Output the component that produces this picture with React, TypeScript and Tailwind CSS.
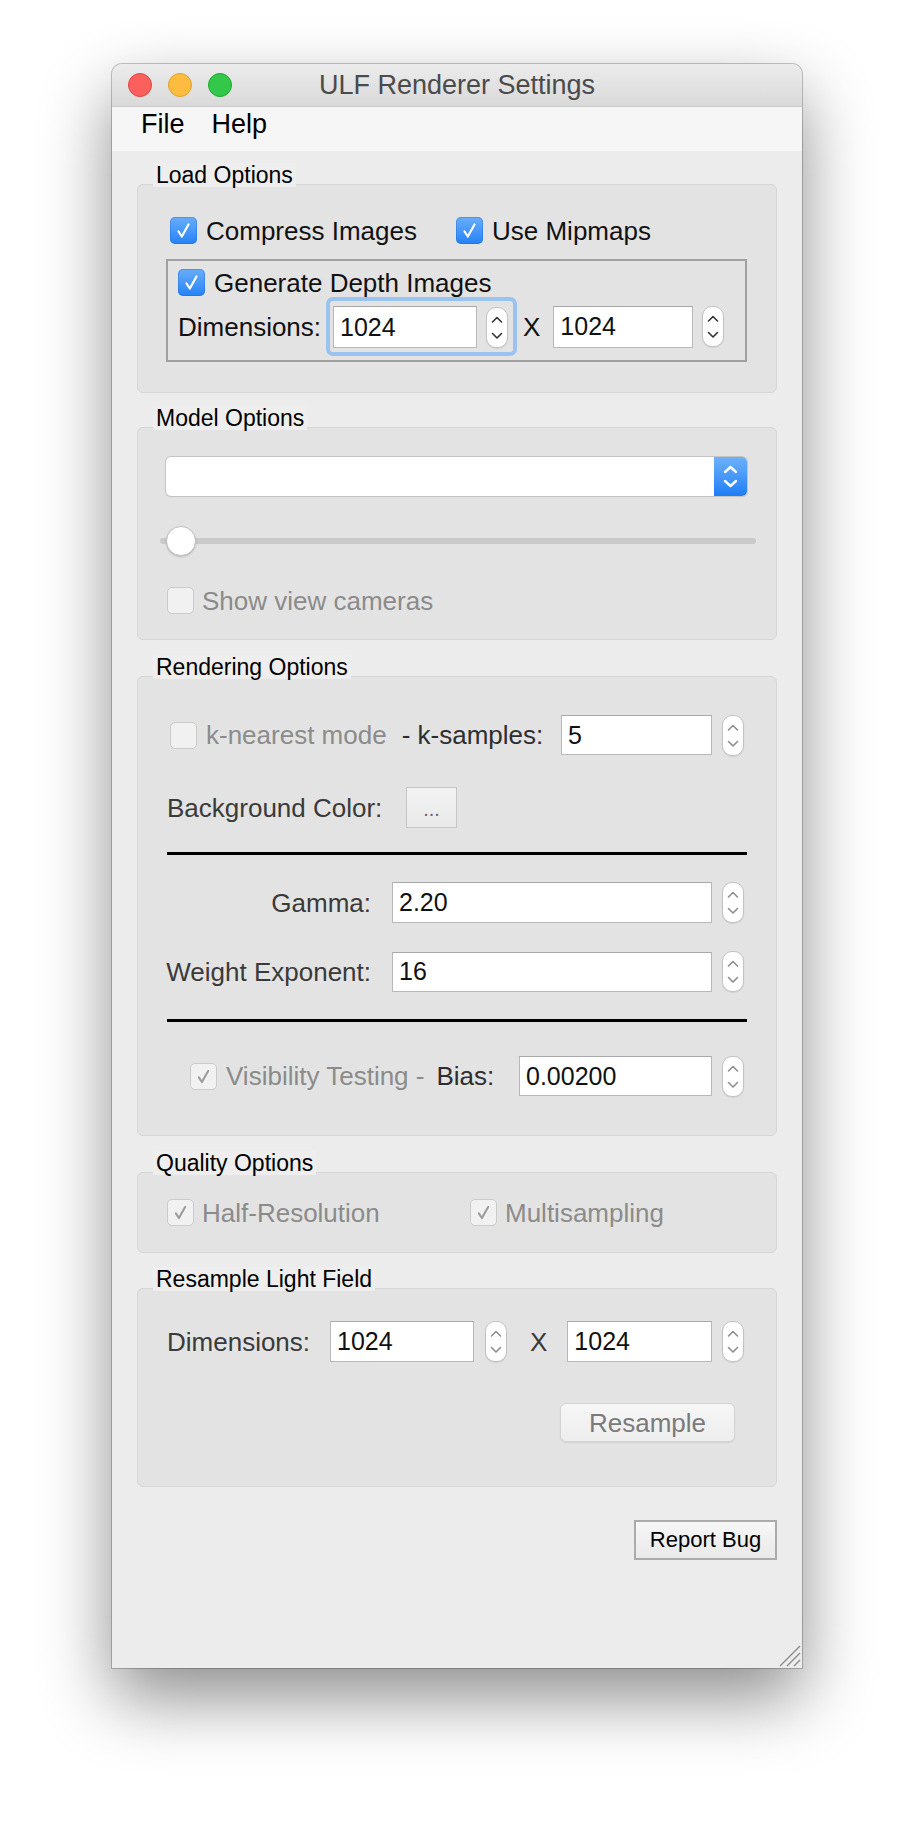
import type { ReactNode } from "react";

// ULF Renderer Settings — macOS Qt settings window

function Tick({ color }: { color: string }) {
  return (
    <svg viewBox="0 0 27 27" className="h-full w-full">
      <path
        d="M8.5 14.5 L11.8 19.5 L18.5 7.5"
        fill="none"
        stroke={color}
        strokeWidth="2.2"
        strokeLinecap="round"
        strokeLinejoin="round"
      />
    </svg>
  );
}

function CheckBox({ checked, disabled }: { checked?: boolean; disabled?: boolean }) {
  if (checked && !disabled) {
    return (
      <span className="block h-[27px] w-[27px] shrink-0 rounded-[5px] bg-gradient-to-b from-[#68adfb] to-[#2082f6] shadow-[inset_0_0_0_1px_rgba(30,100,210,0.35)]">
        <Tick color="#ffffff" />
      </span>
    );
  }
  return (
    <span className="block h-[27px] w-[27px] shrink-0 rounded-[5px] border border-[#cbcbcb] bg-[#f1f1f1]">
      {checked && <Tick color="#9a9a9a" />}
    </span>
  );
}

function Stepper({ dim }: { dim?: boolean }) {
  const c = dim ? "#8e8e8e" : "#333333";
  return (
    <span className="block h-[41px] w-[22px] shrink-0 rounded-[10px] border border-[#c3c3c3] bg-white shadow-[0_1px_1px_rgba(0,0,0,0.08)]">
      <svg viewBox="0 0 20 39" className="h-full w-full">
        <path d="M5.5 14 L10 9.5 L14.5 14" fill="none" stroke={c} strokeWidth="1.6" strokeLinecap="round" strokeLinejoin="round" />
        <path d="M5.5 25.5 L10 30 L14.5 25.5" fill="none" stroke={c} strokeWidth="1.6" strokeLinecap="round" strokeLinejoin="round" />
      </svg>
    </span>
  );
}

function Field({ value, className }: { value: string; className: string }) {
  return (
    <div
      className={`flex shrink-0 items-center border border-[#b8b8b8] border-t-[#a9a9a9] bg-white pl-[6px] text-[25px] leading-none text-[#111] ${className}`}
    >
      {value}
    </div>
  );
}

function Group({
  title,
  className,
  boxClassName,
  children,
}: {
  title: string;
  className: string;
  boxClassName: string;
  children: ReactNode;
}) {
  return (
    <div className={className}>
      <div className="relative z-10 h-[21px] pl-[16px]">
        <span className="inline-block bg-[#eeeeee] px-[3px] text-[23px] leading-[24px] text-black">{title}</span>
      </div>
      <div className={`rounded-[6px] border border-[#d6d6d6] bg-[#e3e3e3] ${boxClassName}`}>{children}</div>
    </div>
  );
}

export default function App() {
  return (
    <div className="h-[1828px] w-[914px] overflow-hidden bg-white pl-[112px] pt-[64px] font-['Liberation_Sans',Arial,sans-serif]">
      <div className="relative flex h-[1604px] w-[690px] flex-col rounded-t-[10px] bg-[#ececec] shadow-[0_30px_70px_rgba(0,0,0,0.45),0_0_0_1px_rgba(0,0,0,0.22)]">
        {/* title bar */}
        <div className="grid h-[43px] grid-cols-[1fr_auto_1fr] items-center rounded-t-[10px] border-b border-[#c9c9c9] bg-gradient-to-b from-[#ececec] to-[#d9d9d9]">
          <div className="flex items-center gap-[16px] pl-[16px]">
            <span className="h-[24px] w-[24px] rounded-full border border-[#e0443e] bg-[#fc605c]" />
            <span className="h-[24px] w-[24px] rounded-full border border-[#dea123] bg-[#fdbc40]" />
            <span className="h-[24px] w-[24px] rounded-full border border-[#1aab29] bg-[#34c84a]" />
          </div>
          <div className="text-[27px] leading-none text-[#4b4b4b]">ULF Renderer Settings</div>
          <div />
        </div>

        {/* menu bar */}
        <div className="flex h-[44px] gap-[27px] bg-[#f6f6f6] pl-[29px] pt-[4px] text-[27px] leading-none text-black">
          <span>File</span>
          <span>Help</span>
        </div>

        <div className="flex flex-col px-[25px]">
          {/* Load Options */}
          <Group title="Load Options" className="mt-[12px]" boxClassName="h-[209px] pl-[28px] pt-[32px]">
            <div className="flex h-[27px] items-center pl-[4px] text-[26px] leading-none text-[#111]">
              <div className="flex w-[286px] items-center gap-[9px]">
                <CheckBox checked />
                <span>Compress Images</span>
              </div>
              <div className="flex items-center gap-[9px]">
                <CheckBox checked />
                <span>Use Mipmaps</span>
              </div>
            </div>
            <div className="mt-[15px] h-[103px] w-[581px] border-2 border-[#a0a0a0] pl-[10px] pt-[8px] text-[26px] leading-none text-[#111]">
              <div className="flex h-[27px] items-center gap-[9px]">
                <CheckBox checked />
                <span>Generate Depth Images</span>
              </div>
              <div className="mt-[1px] flex items-center">
                <span className="w-[148px]">Dimensions:</span>
                <div className="flex items-center rounded-[7px] border-[4px] border-[#9cc3ef] pb-[4px] pl-[3px] pr-[5px] pt-[5px]">
                  <Field value="1024" className="h-[42px] w-[144px]" />
                  <span className="ml-[9px]">
                    <Stepper />
                  </span>
                </div>
                <span className="ml-[6px]">X</span>
                <Field value="1024" className="ml-[13px] h-[42px] w-[140px]" />
                <span className="ml-[9px]">
                  <Stepper />
                </span>
              </div>
            </div>
          </Group>

          {/* Model Options */}
          <Group title="Model Options" className="mt-[13px]" boxClassName="h-[213px] pl-[28px] pt-[29px]">
            <div className="flex h-[39px] w-[581px] rounded-[5px] bg-white shadow-[0_0_0_1px_#c4c4c4,0_1px_1px_rgba(0,0,0,0.15)]">
              <div className="flex-1" />
              <div className="flex w-[33px] items-center justify-center rounded-r-[5px] bg-gradient-to-b from-[#6cb2fb] to-[#1b7df5]">
                <svg viewBox="0 0 33 39" className="h-full w-full">
                  <path d="M11 15 L16.5 10 L22 15" fill="none" stroke="#fff" strokeWidth="2.4" strokeLinecap="round" strokeLinejoin="round" />
                  <path d="M11 24 L16.5 29 L22 24" fill="none" stroke="#fff" strokeWidth="2.4" strokeLinecap="round" strokeLinejoin="round" />
                </svg>
              </div>
            </div>
            <div className="relative -ml-[6px] mt-[30px] h-[30px] w-[596px]">
              <div className="absolute left-0 right-0 top-[12px] h-[6px] rounded-full bg-[#cacaca]" />
              <div className="absolute left-[6px] top-0 h-[30px] w-[30px] rounded-full border border-[#c2c2c2] bg-white shadow-[0_1px_2px_rgba(0,0,0,0.2)]" />
            </div>
            <div className="mt-[31px] flex items-center gap-[8px] pl-[1px] text-[26px] leading-none text-[#8b8b8b]">
              <CheckBox disabled />
              <span>Show view cameras</span>
            </div>
          </Group>

          {/* Rendering Options */}
          <Group title="Rendering Options" className="mt-[15px]" boxClassName="h-[460px] pl-[29px] pt-[38px]">
            <div className="flex h-[40px] items-center text-[26px] leading-none">
              <div className="flex w-[394px] items-center">
                <span className="ml-[3px]">
                  <CheckBox disabled />
                </span>
                <span className="ml-[9px] text-[#8b8b8b]">k-nearest mode</span>
                <span className="ml-[15px] text-[#2e2e2e]">- k-samples:</span>
              </div>
              <Field value="5" className="h-[40px] w-[151px]" />
              <span className="ml-[10px]">
                <Stepper dim />
              </span>
            </div>

            <div className="mt-[32px] flex items-center text-[26px] leading-none text-[#3a3a3a]">
              <span className="w-[239px]">Background Color:</span>
              <div className="flex h-[41px] w-[51px] items-center justify-center border border-[#c6c6c6] bg-gradient-to-b from-[#f3f3f3] to-[#e9e9e9] pt-[2px] text-[20px] text-[#666]">
                ...
              </div>
            </div>

            <div className="mt-[24px] h-[3px] w-[580px] bg-black" />

            <div className="mt-[27px] flex items-center text-[26px] leading-none text-[#3a3a3a]">
              <span className="flex w-[204px] justify-end whitespace-nowrap">Gamma:</span>
              <Field value="2.20" className="ml-[21px] h-[41px] w-[320px]" />
              <span className="ml-[10px]">
                <Stepper dim />
              </span>
            </div>
            <div className="mt-[28px] flex items-center text-[26px] leading-none text-[#3a3a3a]">
              <span className="flex w-[204px] justify-end whitespace-nowrap">Weight Exponent:</span>
              <Field value="16" className="ml-[21px] h-[40px] w-[320px]" />
              <span className="ml-[10px]">
                <Stepper dim />
              </span>
            </div>

            <div className="mt-[27px] h-[3px] w-[580px] bg-black" />

            <div className="mt-[34px] flex h-[40px] items-center text-[26px] leading-none">
              <div className="flex w-[352px] items-center whitespace-nowrap">
                <span className="ml-[23px]">
                  <CheckBox checked disabled />
                </span>
                <span className="ml-[9px] text-[#8b8b8b]">Visibility Testing -</span>
                <span className="ml-[12px] text-[#2e2e2e]">Bias:</span>
              </div>
              <Field value="0.00200" className="h-[40px] w-[193px]" />
              <span className="ml-[10px]">
                <Stepper dim />
              </span>
            </div>
          </Group>

          {/* Quality Options */}
          <Group title="Quality Options" className="mt-[15px]" boxClassName="h-[81px] pl-[29px] pt-[26px]">
            <div className="flex items-center text-[26px] leading-none text-[#8b8b8b]">
              <div className="flex w-[303px] items-center gap-[8px]">
                <CheckBox checked disabled />
                <span>Half-Resolution</span>
              </div>
              <div className="flex items-center gap-[8px]">
                <CheckBox checked disabled />
                <span>Multisampling</span>
              </div>
            </div>
          </Group>

          {/* Resample Light Field */}
          <Group title="Resample Light Field" className="mt-[14px]" boxClassName="h-[199px] pl-[29px] pr-[29px] pt-[32px]">
            <div className="flex items-center text-[26px] leading-none text-[#3a3a3a]">
              <span className="w-[163px]">Dimensions:</span>
              <Field value="1024" className="h-[41px] w-[144px]" />
              <span className="ml-[11px]">
                <Stepper dim />
              </span>
              <span className="ml-[23px]">X</span>
              <Field value="1024" className="ml-[20px] h-[41px] w-[145px]" />
              <span className="ml-[10px]">
                <Stepper dim />
              </span>
            </div>
            <div className="mt-[41px] flex justify-end pr-[12px]">
              <div className="flex h-[39px] w-[175px] items-center justify-center rounded-[6px] border border-[#d3d3d3] bg-gradient-to-b from-[#f6f6f6] to-[#eeeeee] text-[26px] leading-none text-[#7a7a7a] shadow-[0_1px_1px_rgba(0,0,0,0.08)]">
                Resample
              </div>
            </div>
          </Group>

          <div className="mt-[33px] flex justify-end">
            <div className="flex h-[40px] w-[143px] items-center justify-center border-2 border-[#ababab] bg-gradient-to-b from-[#f7f7f7] to-[#e9e9e9] text-[22px] leading-none text-black">
              Report Bug
            </div>
          </div>
        </div>

        {/* resize grip */}
        <svg viewBox="0 0 22 22" className="absolute bottom-[1px] right-[1px] h-[22px] w-[22px]">
          <path d="M1 21 L21 1 M8 21 L21 8 M15 21 L21 15" stroke="#8c8c8c" strokeWidth="1.4" />
        </svg>
      </div>
    </div>
  );
}
